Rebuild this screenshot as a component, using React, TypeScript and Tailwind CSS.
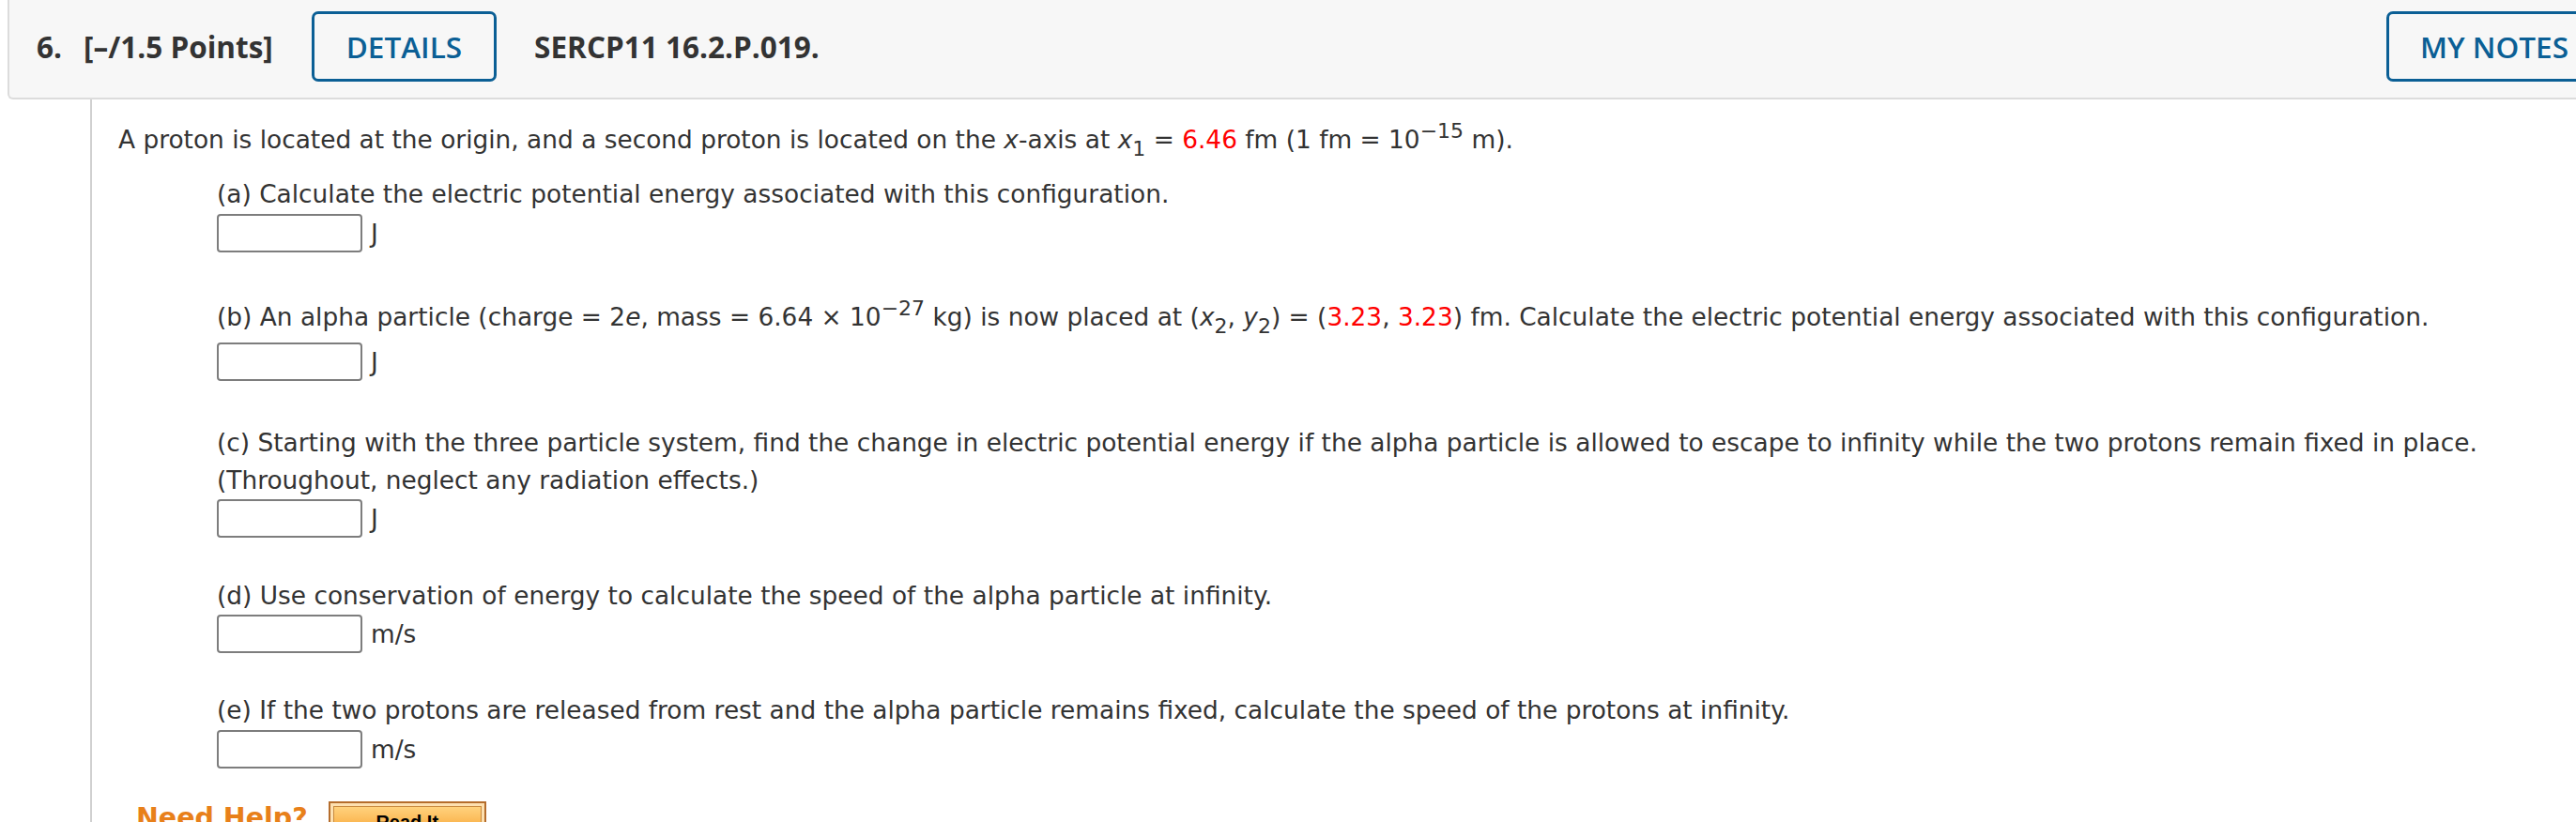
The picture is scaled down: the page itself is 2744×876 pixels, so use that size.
import React from "react";

function Answer({ unit }: { unit: string }) {
  return (
    <div className="flex items-center h-[41px]">
      <input
        readOnly
        className="w-[155px] h-[41px] border-2 border-[#7d7d7d] rounded-[4px] bg-white outline-none"
      />
      <span className="ml-[9px]">{unit}</span>
    </div>
  );
}

const Red = ({ children }: { children: React.ReactNode }) => (
  <span className="text-[#ff0000]">{children}</span>
);

export default function App() {
  return (
    <div className="w-full h-[876px] overflow-hidden bg-white">
      <div className="ml-[8px] w-[2792px] h-[106px] bg-[#f7f7f7] border-l-2 border-b-2 border-[#dcdcdc] rounded-bl-[6px] flex items-start pt-[12px] pl-[29px] pr-[21px] font-['Open_Sans',sans-serif] text-[31.5px]">
        <div className="h-[75px] flex items-center font-bold text-[#333333]">
          <span>6.</span>
          <span className="ml-[23px]">[–/1.5 Points]</span>
        </div>
        <button className="ml-[41px] h-[75px] px-[34px] border-[3px] border-[#0b5f95] rounded-[7px] text-[#0b5f95] font-semibold flex items-center">
          DETAILS
        </button>
        <div className="ml-[40px] h-[75px] flex items-center font-bold text-[#333333]">
          SERCP11 16.2.P.019.
        </div>
        <button className="ml-auto h-[75px] px-[33px] border-[3px] border-[#0b5f95] rounded-[7px] text-[#0b5f95] font-semibold flex items-center mr-[7px]">
          MY NOTES
        </button>
      </div>

      <div className="ml-[96px] border-l-2 border-[#d0d0d0] pl-[28px] pt-[23px] text-[26.4px] leading-[40px] text-[#333333] font-['DejaVu_Sans',Verdana,sans-serif]">
        <div>
          A proton is located at the origin, and a second proton is located on the <i>x</i>-axis at <i>x</i>
          <sub className="text-[22px] bottom-[-0.35em]">1</sub> = <Red>6.46</Red> fm (1 fm = 10
          <sup className="text-[22px]">−15</sup> m).
        </div>

        <div className="pl-[105px]">
          <div className="mt-[18px]">(a) Calculate the electric potential energy associated with this configuration.</div>
          <div className="mt-[1px]">
            <Answer unit="J" />
          </div>

          <div className="mt-[49px]">
            (b) An alpha particle (charge = 2<i>e</i>, mass = 6.64 × 10<sup className="text-[22px]">−27</sup> kg) is
            now placed at (<i>x</i>
            <sub className="text-[22px] bottom-[-0.35em]">2</sub>, <i>y</i>
            <sub className="text-[22px] bottom-[-0.35em]">2</sub>) = (<Red>3.23</Red>, <Red>3.23</Red>) fm. Calculate
            the electric potential energy associated with this configuration.
          </div>
          <div className="mt-[7px]">
            <Answer unit="J" />
          </div>

          <div className="mt-[46px]">
            (c) Starting with the three particle system, find the change in electric potential energy if the alpha
            particle is allowed to escape to infinity while the two protons remain fixed in place.
            <br />
            (Throughout, neglect any radiation effects.)
          </div>
          <Answer unit="J" />

          <div className="mt-[42px]">(d) Use conservation of energy to calculate the speed of the alpha particle at infinity.</div>
          <Answer unit="m/s" />

          <div className="mt-[41px]">
            (e) If the two protons are released from rest and the alpha particle remains fixed, calculate the speed of
            the protons at infinity.
          </div>
          <div className="mt-[1px]">
            <Answer unit="m/s" />
          </div>
        </div>

        <div className="mt-[33px] flex items-start">
          <span className="ml-[19px] text-[28.5px] font-bold leading-[40px] text-[#e8801a]">Need Help?</span>
          <div className="ml-[22px] mt-[2px] w-[168px] h-[40px] border-2 border-[#b56d2c] bg-[#fde0b0] p-[3px]">
            <div className="h-full border border-[#c98a3f] bg-gradient-to-b from-[#ffd27d] to-[#f7a52b] flex justify-center pt-[4px] font-['Liberation_Sans',Arial,sans-serif] font-bold text-[20px] leading-[24px] text-black">
              Read It
            </div>
          </div>
        </div>
      </div>
    </div>
  );
}
